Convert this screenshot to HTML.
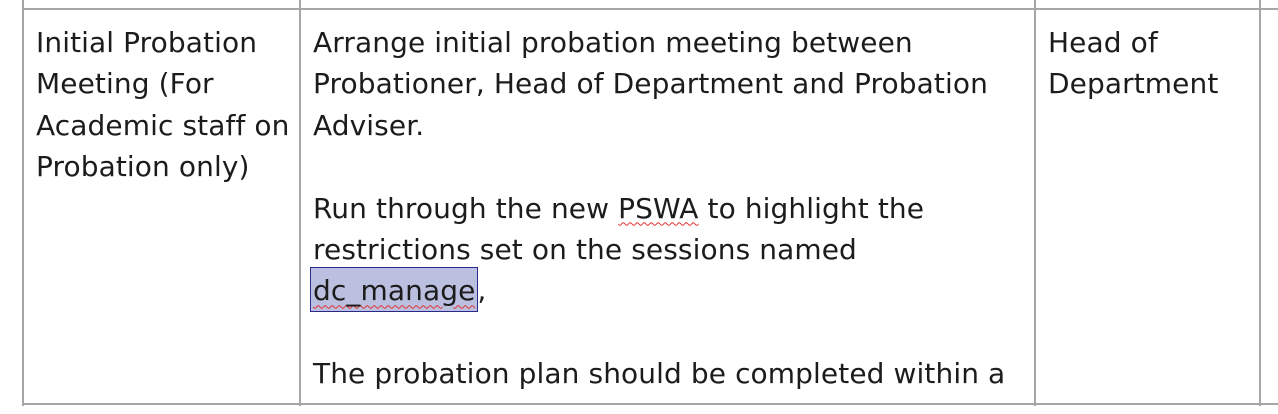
<!DOCTYPE html>
<html><head><style>
body{margin:0;width:1278px;height:414px;background:#fff;overflow:hidden;position:relative;font-family:"DejaVu Sans","Liberation Sans",sans-serif;font-size:28px;letter-spacing:0.1px;color:#1c1c1c;}
.v{position:absolute;top:0;width:2px;height:406px;background:#a6a6a6}
.h{position:absolute;height:2px;background:#a6a6a6}
.t{position:absolute;line-height:41.4px;white-space:nowrap}
.hl{background:#bcc0e0;outline:1.5px solid #2a2a8a;padding:6px 2px 4px;margin-left:-2px;text-decoration:underline wavy #e03030;text-decoration-thickness:1px;text-underline-offset:4px}
</style></head><body>
<div class="h" style="left:22px;width:1256px;top:8px"></div>
<div class="h" style="left:22px;width:1256px;top:403px"></div>
<div class="v" style="left:22px"></div>
<div class="v" style="left:299px"></div>
<div class="v" style="left:1034px"></div>
<div class="v" style="left:1259px"></div>
<div class="t" style="left:36px;top:22px">Initial Probation<br>Meeting (For<br>Academic staff on<br>Probation only)</div>
<div class="t" style="left:313px;top:22px">Arrange initial probation meeting between<br>Probationer, Head of Department and Probation<br>Adviser.<br><br>Run through the new <span style="text-decoration:underline wavy #e03030;text-decoration-thickness:1px;text-underline-offset:4px">PSWA</span> to highlight the<br>restrictions set on the sessions named<br><span class="hl">dc_manage</span>,<br><br>The probation plan should be completed within a</div>
<div class="t" style="left:1048px;top:22px">Head of<br>Department</div>
</body></html>
